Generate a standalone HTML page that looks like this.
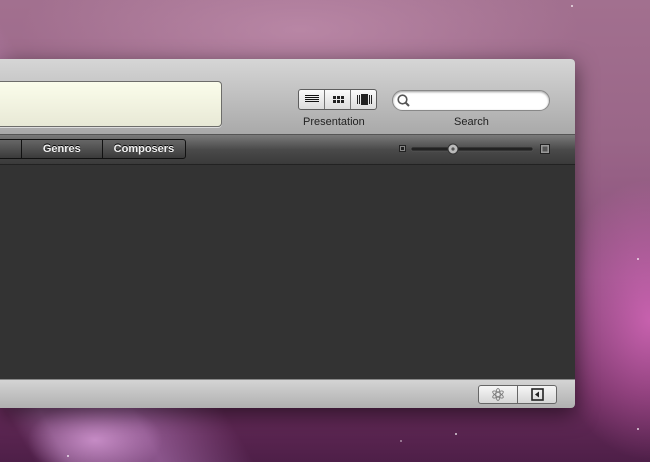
<!DOCTYPE html>
<html style="background:#6a2d5c"><head><meta charset="utf-8"><style>
*{margin:0;padding:0;box-sizing:border-box}
html,body{width:650px;height:462px;overflow:hidden}
body{position:relative;font-family:"Liberation Sans",sans-serif;
background:
radial-gradient(ellipse 90px 50px at 95px 440px,rgba(225,165,225,.7),transparent 75%),
linear-gradient(60deg,transparent 0,transparent 30px,rgba(200,150,210,.35) 60px,rgba(210,150,220,.45) 140px,transparent 220px),
radial-gradient(ellipse 140px 200px at 650px 320px,rgba(230,110,200,.7),transparent 70%),
radial-gradient(ellipse 400px 120px at 300px 30px,rgba(200,150,180,.6),transparent 70%),
linear-gradient(180deg,#a2708f 0%,#9a6688 30%,#8a4e7c 60%,#6a2d5c 85%,#4e1f48 100%);}
.win{position:absolute;left:0;top:59px;width:575px;height:349px;border-radius:0 4px 4px 0;overflow:hidden;box-shadow:0 6px 22px rgba(0,0,0,.55);background:#333}
.tb{position:absolute;left:0;top:0;width:575px;height:76px;background:linear-gradient(#d6d6d6,#c4c4c4 40%,#a9a9a9);border-bottom:1px solid #555}
.field{position:absolute;left:-6px;top:22px;width:228px;height:46px;border:1px solid #6d6d6a;border-radius:4px;background:linear-gradient(#fbfdeb,#e8e9d6);box-shadow:0 1px 0 #ddd}
.seg{position:absolute;left:298px;top:30px;width:79px;height:21px;border:1px solid #5e5e5e;border-radius:3px;background:linear-gradient(#fafafa,#dcdcdc);display:flex}
.seg div{flex:1;border-right:1px solid #777;position:relative}
.seg div:last-child{border:0}
.search{position:absolute;left:392px;top:31px;width:158px;height:21px;border-radius:11px;background:#fff;border:1px solid #888;box-shadow:inset 0 1px 2px #999}
.lbl{position:absolute;top:57px;font-size:11px;color:#222}
.dark{position:absolute;left:0;top:76px;width:575px;height:30px;background:linear-gradient(#7a7a7a,#4a4a4a 50%,#3a3a3a);border-bottom:1px solid #222}
.tabs{position:absolute;left:-3px;top:4px;height:20px;width:189px;border:1px solid #111;border-radius:3px;display:flex;background:linear-gradient(#666,#3a3a3a)}
.tabs div{border-right:1px solid #111;color:#f2f2f2;font-size:11px;font-weight:bold;line-height:18px;text-align:center;text-shadow:0 -1px 0 #000}
.tabs div:last-child{border:0}
.content{position:absolute;left:0;top:106px;width:575px;height:214px;background:#333}
.bot{position:absolute;left:0;top:320px;width:575px;height:29px;background:linear-gradient(#d4d4d4,#b0b0b0);border-top:1px solid #888}
.bb{position:absolute;left:478px;top:5px;width:79px;height:19px;border:1px solid #666;border-radius:3px;background:linear-gradient(#f6f6f6,#d6d6d6);display:flex}
.bb div{flex:1;border-right:1px solid #666;position:relative}
.bb div:last-child{border:0}
.star{position:absolute;width:2px;height:2px;background:#fff;border-radius:1px;opacity:.8}
</style></head><body>
<div class="star" style="left:571px;top:5px"></div><div class="star" style="left:637px;top:258px"></div><div class="star" style="left:637px;top:428px"></div><div class="star" style="left:455px;top:433px"></div><div class="star" style="left:67px;top:455px"></div><div class="star" style="left:400px;top:440px;opacity:.5"></div>
<div class="win">
<div class="tb">
<div class="field"></div>
<div class="seg">
<div><svg width="26" height="19" style="position:absolute;left:0;top:0"><g stroke="#111" stroke-width="1"><line x1="6" y1="5.5" x2="20" y2="5.5"/><line x1="6" y1="7.5" x2="20" y2="7.5"/><line x1="6" y1="9.5" x2="20" y2="9.5"/><line x1="6" y1="11.5" x2="20" y2="11.5"/></g></svg></div>
<div><svg width="26" height="19" style="position:absolute;left:0;top:0"><g fill="#222"><rect x="8" y="6" width="3" height="3"/><rect x="12" y="6" width="3" height="3"/><rect x="16" y="6" width="3" height="3"/><rect x="8" y="10" width="3" height="3"/><rect x="12" y="10" width="3" height="3"/><rect x="16" y="10" width="3" height="3"/></g></svg></div>
<div><svg width="26" height="19" style="position:absolute;left:0;top:0"><g fill="#222"><rect x="6" y="5" width="1" height="9"/><rect x="8" y="5" width="1" height="9"/><rect x="10" y="4" width="7" height="11"/><rect x="18" y="5" width="1" height="9"/><rect x="20" y="5" width="1" height="9"/></g></svg></div>
</div>
<div class="search"><svg width="16" height="16" style="position:absolute;left:3px;top:2px"><circle cx="6.5" cy="6.5" r="4.3" fill="none" stroke="#555" stroke-width="1.6"/><line x1="9.5" y1="9.5" x2="13" y2="13" stroke="#555" stroke-width="2"/></svg></div>
<div class="lbl" style="left:303px">Presentation</div>
<div class="lbl" style="left:454px">Search</div>
</div>
<div class="dark">
<div class="tabs"><div style="width:24px"></div><div style="width:82px">Genres</div><div style="width:83px">Composers</div></div>
<svg width="160" height="28" style="position:absolute;left:396px;top:1px">
<rect x="3.5" y="9.5" width="6" height="6" fill="#888" stroke="#222"/><rect x="5" y="11" width="3" height="3" fill="#222"/>
<rect x="15" y="11" width="122" height="4" rx="2" fill="#222" stroke="#555" stroke-width=".8"/>
<circle cx="57" cy="13" r="5" fill="#bbb" stroke="#333"/><circle cx="57" cy="13" r="1.6" fill="#555"/>
<rect x="144.5" y="8.5" width="9" height="9" fill="#999" stroke="#222"/><rect x="146.5" y="10.5" width="5" height="5" fill="#555"/>
</svg>
</div>
<div class="content"></div>
<div class="bot">
<div class="bb">
<div><svg width="38" height="17" style="position:absolute;left:0;top:0"><g fill="none" stroke="#777" stroke-width=".8"><ellipse cx="19" cy="8.5" rx="2.2" ry="6"/><ellipse cx="19" cy="8.5" rx="2.2" ry="6" transform="rotate(60 19 8.5)"/><ellipse cx="19" cy="8.5" rx="2.2" ry="6" transform="rotate(-60 19 8.5)"/></g></svg></div>
<div><svg width="39" height="17" style="position:absolute;left:0;top:0"><rect x="14" y="3" width="11" height="11" fill="none" stroke="#222" stroke-width="1.6"/><path d="M21 5.5 L17 8.5 L21 11.5Z" fill="#222"/></svg></div>
</div>
</div>
</div>
</body></html>
